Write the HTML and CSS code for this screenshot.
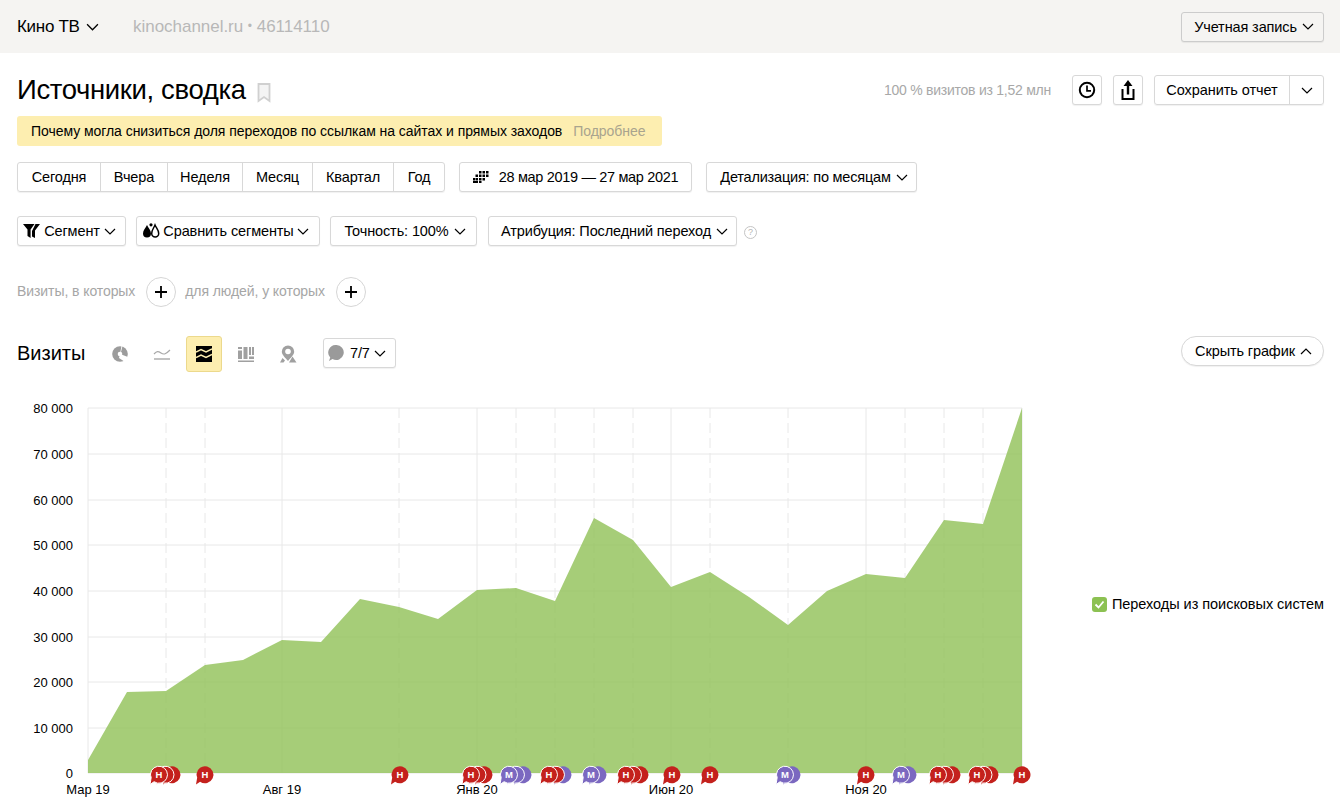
FILE: index.html
```html
<!DOCTYPE html>
<html lang="ru">
<head>
<meta charset="utf-8">
<title>Источники, сводка</title>
<link rel="stylesheet" href="styles.css">
</head>
<body>
<svg class="defs" width="0" height="0" aria-hidden="true">
  <defs>
    <path id="chev" d="M1 1l5 5 5-5" fill="none" stroke="currentColor" stroke-width="1.200"/>
    <path id="bub" d="M-8.500 0a8.500 8.500 0 1 1 3.600 7.700L-9 10.500-7.800 3.400A8.500 8.500 0 0 1-8.500 0z"/>
  </defs>
</svg>
<header class="topbar">
  <div class="site">Кино ТВ <svg class="chev chev-lg" viewBox="0 0 12 7"><use href="#chev"/></svg></div>
  <div class="domain">kinochannel.ru <span class="dot">•</span> 46114110</div>
  <button class="btn account">Учетная запись <svg class="chev" viewBox="0 0 12 7"><use href="#chev"/></svg></button>
</header>
<main class="page">
  <div class="title-row">
    <h1 class="title">Источники, сводка</h1>
    <svg class="bookmark" viewBox="0 0 14 20"><path d="M1.500 1h11v17L7 14l-5.500 4z" fill="#f4f4f4" stroke="#d0d0d0" stroke-width="1.800"/></svg>
    <div class="title-tools">
      <span class="share-info">100 % визитов из 1,52 млн</span>
      <button class="btn icon-btn"><svg width="18" height="18" viewBox="0 0 18 18"><circle cx="9" cy="9" r="7.200" fill="none" stroke="#000" stroke-width="2"/><path d="M9 4.500V9.800H13" fill="none" stroke="#000" stroke-width="1.700"/></svg></button>
      <button class="btn icon-btn"><svg width="16" height="22" viewBox="0 0 16 22"><path d="M8 1l4.500 6H9.200v8.500H6.800V7H3.500z" fill="#000"/><path d="M1.500 10v11h13V10h-2v9h-9v-9z" fill="#000"/></svg></button>
      <div class="group save">
        <button class="seg-btn save-main">Сохранить отчет</button>
        <button class="seg-btn save-more"><svg class="chev" viewBox="0 0 12 7"><use href="#chev"/></svg></button>
      </div>
    </div>
  </div>
  <div class="banner">
    <span>Почему могла снизиться доля переходов по ссылкам на сайтах и прямых заходов</span>
    <span class="banner-link">Подробнее</span>
  </div>
  <div class="controls row-dates">
    <div class="group">
      <button class="seg-btn w-today">Сегодня</button>
      <button class="seg-btn w-yest">Вчера</button>
      <button class="seg-btn w-week">Неделя</button>
      <button class="seg-btn w-month">Месяц</button>
      <button class="seg-btn w-quarter">Квартал</button>
      <button class="seg-btn w-year">Год</button>
    </div>
    <button class="btn date">
      <svg width="16" height="12" viewBox="0 0 16 12" fill="#000"><path d="M6 0h2.500v2.500H6zM9.500 0H12v2.500H9.500zM13 0h2.500v2.500H13zM2.500 3.500H5V6H2.500zM6 3.500h2.500V6H6zM9.500 3.500H12V6H9.500zM13 3.500h2.500V6H13zM0 7h2.500v2.500H0zM3 7h2v2.500H3zM6 7h2.500v2.500H6zM9.500 7H12v2.500H9.500zM0 10h5v2H0zM6 10h2.500v2H6z"/></svg>
      <span class="date-text">28 мар 2019 — 27 мар 2021</span>
    </button>
    <button class="btn detail">Детализация: по месяцам <svg class="chev" viewBox="0 0 12 7"><use href="#chev"/></svg></button>
  </div>
  <div class="controls row-seg">
    <button class="btn segment">
      <svg width="17" height="14" viewBox="0 0 17 14" fill="#000"><path d="M0 0h11.500L7.600 5.500V14L4.500 12V5.500z"/><path d="M12.500 0h4.500l-5 6.500V14L9 12.500V7z"/></svg>
      <span>Сегмент</span><svg class="chev" viewBox="0 0 12 7"><use href="#chev"/></svg>
    </button>
    <button class="btn compare">
      <svg width="18" height="16" viewBox="0 0 18 16"><path d="M5 2C3.500 5 1 7.500 1 10.500a4 4 0 0 0 8 0C9 7.500 6.500 5 5 2z" fill="#000"/><path d="M13 2c-1.200 3-3.300 5-3.300 8.500a3.500 3.500 0 0 0 7 0C16.700 7 14.200 5 13 2z" fill="#fff" stroke="#000" stroke-width="1.500"/><circle cx="9" cy="1.800" r="1.600" fill="#000"/></svg>
      <span>Сравнить сегменты</span><svg class="chev" viewBox="0 0 12 7"><use href="#chev"/></svg>
    </button>
    <button class="btn accuracy">Точность: 100% <svg class="chev" viewBox="0 0 12 7"><use href="#chev"/></svg></button>
    <button class="btn attribution">Атрибуция: Последний переход <svg class="chev" viewBox="0 0 12 7"><use href="#chev"/></svg></button>
    <span class="help">?</span>
  </div>
  <div class="conditions">
    <span class="cond-text">Визиты, в которых</span>
    <button class="plus"><svg width="14" height="14" viewBox="0 0 14 14"><path d="M7 1v12M1 7h12" stroke="#000" stroke-width="1.800"/></svg></button>
    <span class="cond-text">для людей, у которых</span>
    <button class="plus"><svg width="14" height="14" viewBox="0 0 14 14"><path d="M7 1v12M1 7h12" stroke="#000" stroke-width="1.800"/></svg></button>
  </div>
  <div class="chart-head">
    <h2 class="chart-title">Визиты</h2>
    <span class="type-btn"><svg width="16" height="16" viewBox="0 0 16 16"><circle cx="8" cy="8" r="7.800" fill="#9c9c9c"/><path d="M8 8L16 11 13 16 7 12z" fill="#fff"/><path d="M8 8L9.500 0 10.500 0 9 6z" fill="#fff"/><circle cx="8" cy="8" r="2.300" fill="#fff"/></svg></span>
    <span class="type-btn"><svg width="18" height="12" viewBox="0 0 18 12" fill="none" stroke="#a8a8a8" stroke-width="1.200"><path d="M1 6c3-3 4-3 7-1s5 1 9-3"/><path d="M1 11h16" stroke-width="1.400"/></svg></span>
    <span class="type-btn active"><svg width="16" height="16" viewBox="0 0 16 16"><rect width="16" height="16" fill="#000"/><path d="M0 6l5-2.500 5 2.500 6-3M0 11.500l5-2.500 5 2.500 6-3" fill="none" stroke="#fdeeb0" stroke-width="1.500"/></svg></span>
    <span class="type-btn"><svg width="18" height="18" viewBox="0 0 18 18" fill="#a0a0a0"><path d="M1 2h4v2H1zM1 5.500h4V14H1zM6.500 2h4v12h-4zM12 2h2v8h-2zM15 2h2v8h-2zM12 11.500h5V14h-5zM1 15.500h16V17H1z"/></svg></span>
    <span class="type-btn"><svg width="18" height="18" viewBox="0 0 18 18"><path d="M9 .5a6.200 6.200 0 0 1 6.200 6.200c0 2.800-3.500 6-6.200 9.300-2.700-3.300-6.200-6.500-6.200-9.300A6.200 6.200 0 0 1 9 .5z" fill="#a0a0a0"/><circle cx="9" cy="6.500" r="2.800" fill="#fff"/><path d="M1 17.500l2.500-4.500 2.500 2.500-1.500 2zM10 17.500l3.500-6 4 6z" fill="#a0a0a0"/></svg></span>
    <button class="btn notes">
      <svg width="16" height="16" viewBox="0 0 16 16"><path d="M8 0a7.500 7.500 0 1 1-3.500 14L1 16l1.200-3.500A7.500 7.500 0 0 1 8 0z" fill="#9a9a9a"/></svg>
      <span>7/7</span><svg class="chev" viewBox="0 0 12 7"><use href="#chev"/></svg>
    </button>
    <button class="btn hide-chart">Скрыть график <svg class="chev" viewBox="0 0 12 7"><path d="M1 6l5-5 5 5" fill="none" stroke="currentColor" stroke-width="1.200"/></svg></button>
  </div>
  <div class="chart-row">
    <svg class="chart" width="1040" height="408" viewBox="17 396 1040 408">
      <g class="grid">
        <path d="M88 408H1022M88 454H1022M88 500H1022M88 545H1022M88 591H1022M88 637H1022M88 682H1022M88 728H1022M88 773H1022"/>
        <path d="M88 408V773M282 408V773M477 408V773M671 408V773M866 408V773M1022 408V773"/>
        <path class="dash" d="M166 408V773M205 408V773M399 408V773M516 408V773M555 408V773M594 408V773M633 408V773M710 408V773M788 408V773M905 408V773M944 408V773M983 408V773"/>
      </g>
      <path class="area" d="M88 760L127 692 166 691 205 665 243 660 282 640 321 642 360 599 399 607 438 619 477 590 516 588 555 601 594 518 633 540 671 587 710 572 749 597 788 625 827 591 866 574 905 578 944 520 983 524 1022 408V773H88z"/>
      <g class="axis-y">
        <text x="73" y="413">80 000</text>
        <text x="73" y="459">70 000</text>
        <text x="73" y="505">60 000</text>
        <text x="73" y="550">50 000</text>
        <text x="73" y="596">40 000</text>
        <text x="73" y="642">30 000</text>
        <text x="73" y="687">20 000</text>
        <text x="73" y="733">10 000</text>
        <text x="73" y="778">0</text>
      </g>
      <g class="axis-x">
        <text x="88" y="794">Мар 19</text>
        <text x="282" y="794">Авг 19</text>
        <text x="477" y="794">Янв 20</text>
        <text x="671" y="794">Июн 20</text>
        <text x="866" y="794">Ноя 20</text>
      </g>
      <g class="flags">
        <use class="r" href="#bub" x="172" y="774"/><use class="r e" href="#bub" x="165.500" y="774"/><use class="r e" href="#bub" x="159" y="774"/><text x="159" y="777.500">Н</text>
        <use class="r" href="#bub" x="205" y="774"/><text x="205" y="777.500">Н</text>
        <use class="r" href="#bub" x="400" y="774"/><text x="400" y="777.500">Н</text>
        <use class="r" href="#bub" x="484" y="774"/><use class="r e" href="#bub" x="477.500" y="774"/><use class="r e" href="#bub" x="471" y="774"/><text x="471" y="777.500">Н</text>
        <use class="m" href="#bub" x="523" y="774"/><use class="m e" href="#bub" x="516" y="774"/><use class="m e" href="#bub" x="509" y="774"/><text x="509" y="777.500">М</text>
        <use class="m" href="#bub" x="563" y="774"/><use class="r e" href="#bub" x="556" y="774"/><use class="r e" href="#bub" x="549" y="774"/><text x="549" y="777.500">Н</text>
        <use class="m" href="#bub" x="598" y="774"/><use class="m e" href="#bub" x="591" y="774"/><text x="591" y="777.500">М</text>
        <use class="r" href="#bub" x="640" y="774"/><use class="r e" href="#bub" x="633" y="774"/><use class="r e" href="#bub" x="626" y="774"/><text x="626" y="777.500">Н</text>
        <use class="r" href="#bub" x="672" y="774"/><text x="672" y="777.500">Н</text>
        <use class="r" href="#bub" x="710" y="774"/><text x="710" y="777.500">Н</text>
        <use class="m" href="#bub" x="792" y="774"/><use class="m e" href="#bub" x="785" y="774"/><text x="785" y="777.500">М</text>
        <use class="r" href="#bub" x="866" y="774"/><text x="866" y="777.500">Н</text>
        <use class="m" href="#bub" x="908" y="774"/><use class="m e" href="#bub" x="901" y="774"/><text x="901" y="777.500">М</text>
        <use class="r" href="#bub" x="952" y="774"/><use class="r e" href="#bub" x="945" y="774"/><use class="r e" href="#bub" x="938" y="774"/><text x="938" y="777.500">Н</text>
        <use class="r" href="#bub" x="990" y="774"/><use class="r e" href="#bub" x="983.500" y="774"/><use class="r e" href="#bub" x="977" y="774"/><text x="977" y="777.500">Н</text>
        <use class="r" href="#bub" x="1022" y="774"/><text x="1022" y="777.500">Н</text>
      </g>
    </svg>
    <label class="legend">
      <svg width="15" height="15" viewBox="0 0 15 15"><rect width="15" height="15" rx="3" fill="#8cc152"/><path d="M3.500 7.500l3 3 5-6" fill="none" stroke="#fff" stroke-width="1.800"/></svg>
      <span>Переходы из поисковых систем</span>
    </label>
  </div>
</main>
</body>
</html>
```

FILE: styles.css
```css
* { box-sizing: border-box; }
html, body { margin: 0; padding: 0; background: #fff; }
body {
  font-family: "Liberation Sans", Arial, sans-serif;
  font-size: 14.5px;
  color: #000;
  overflow: hidden;
  height: 809px;
}
.defs { position: absolute; }
button { font: inherit; color: inherit; background: #fff; margin: 0; cursor: pointer; }
.chev { width: 12px; height: 7px; flex: none; display: inline-block; }
.chev-lg { width: 13px; height: 8px; margin-left: 3px; }

.topbar {
  height: 53px;
  background: #f5f4f2;
  display: flex;
  align-items: center;
  padding: 0 16px 0 17px;
}
.site { font-size: 17px; letter-spacing: -.3px; width: 116px; display: flex; align-items: center; gap: 3px; }
.domain { font-size: 17px; color: #b8b8b8; letter-spacing: -.03px; }
.dot { font-size: 12px; vertical-align: 2px; }

.btn {
  height: 30px;
  border: 1px solid #d8d8d8;
  border-radius: 3px;
  background: #fff;
  padding: 0;
  display: inline-flex;
  align-items: center;
  justify-content: center;
  gap: 5px;
  letter-spacing: -.12px;
  white-space: nowrap;
  box-shadow: 0 1px 1px rgba(0, 0, 0, .06);
}
.account { margin-left: auto; width: 143px; padding-left: 3px; background: #f5f4f2; border-color: #ccc; }

.page { padding: 0 16px 0 17px; }
.title-row { display: flex; align-items: center; height: 30px; margin-top: 22px; }
.title { font-size: 27.500px; font-weight: 400; letter-spacing: -.36px; margin: 0; line-height: 30px; }
.bookmark { width: 14px; height: 20px; margin: 6px 0 0 11px; }
.title-tools { margin-left: auto; display: flex; align-items: center; }
.share-info { color: #a8a8a8; font-size: 14px; letter-spacing: -.25px; margin-right: 21px; }
.icon-btn { width: 30px; margin-right: 11px; }
.icon-btn + .group { margin-left: 1px; }
.icon-btn:nth-of-type(2) { margin-right: 10px; }

.group {
  display: inline-flex;
  height: 30px;
  border: 1px solid #d8d8d8;
  border-radius: 3px;
  box-shadow: 0 1px 1px rgba(0, 0, 0, .06);
}
.seg-btn {
  height: 28px;
  border: 0;
  border-right: 1px solid #d8d8d8;
  background: transparent;
  padding: 0;
  letter-spacing: -.12px;
  white-space: nowrap;
}
.seg-btn:last-child { border-right: 0; }
.save-main { width: 135px; letter-spacing: -.06px; }
.save-more { width: 33px; display: inline-flex; align-items: center; justify-content: center; }
.w-today { width: 83px; }
.w-yest { width: 67px; }
.w-week { width: 75px; }
.w-month { width: 70px; }
.w-quarter { width: 81px; }
.w-year { width: 50px; }

.banner {
  margin-top: 11px;
  height: 30px;
  width: 645px;
  background: #fdeeb0;
  border-radius: 3px;
  display: flex;
  align-items: center;
  padding-left: 14px;
  gap: 11px;
  font-size: 14px;
  letter-spacing: -.05px;
  white-space: nowrap;
}
.banner-link { color: #a9a48e; }

.controls { display: flex; align-items: center; }
.row-dates { margin-top: 16px; }
.row-seg { margin-top: 24px; }
.date { width: 233px; margin-left: 14px; gap: 10px; }
.date-text { letter-spacing: -.33px; }
.detail { width: 211px; margin-left: 14px; padding-left: 5px; letter-spacing: -.2px; }
.segment { width: 109px; padding-right: 4px; gap: 4px; }
.compare { width: 184px; margin-left: 10px; padding-right: 5px; gap: 3px; }
.accuracy { width: 147px; margin-left: 10px; padding-left: 3px; }
.attribution { width: 249px; margin-left: 11px; padding-left: 4px; }
.help {
  width: 13px;
  height: 13px;
  margin: 2px 0 0 7px;
  border: 1px solid #c4c4c4;
  border-radius: 50%;
  color: #b4b4b4;
  font-size: 9px;
  line-height: 11px;
  text-align: center;
}

.conditions { display: flex; align-items: center; height: 30px; margin-top: 31px; gap: 11px; }
.cond-text { color: #a6a6a6; font-size: 14px; letter-spacing: -.08px; margin-top: -2px; }
.plus {
  width: 30px;
  height: 30px;
  margin-right: -2px;
  border: 1px solid #d6d6d6;
  border-radius: 50%;
  padding: 0;
  display: flex;
  align-items: center;
  justify-content: center;
}

.chart-head { display: flex; align-items: flex-start; height: 36px; margin-top: 29px; }
.chart-title { font-size: 20px; font-weight: 400; line-height: 34px; margin: 0 8px 0 0; width: 77px; }
.type-btn {
  width: 36px;
  height: 36px;
  margin-right: 6px;
  display: flex;
  align-items: center;
  justify-content: center;
  border-radius: 3px;
}
.active { background: #fdeeb0; border: 1px solid #ecd98c; }
.notes { width: 73px; margin: 2px 0 0 11px; padding-left: 4px; justify-content: flex-start; gap: 6px; }
.notes .chev { margin-left: -2px; }
.hide-chart { margin-left: auto; width: 143px; padding-left: 2px; border-radius: 15px; }

.chart-row { display: flex; align-items: center; justify-content: space-between; margin-top: 24px; }
.chart { display: block; flex: none; }
.grid path { fill: none; stroke: #e8e8e8; stroke-width: 1; }
.grid .dash { stroke-dasharray: 10 5; }
.area { fill: #90c056; fill-opacity: .8; }
.axis-y text { font-size: 13px; text-anchor: end; fill: #000; }
.axis-x text { font-size: 13px; text-anchor: middle; fill: #000; }
.flags .r { fill: #c4211d; }
.flags .m { fill: #7b68c0; }
.flags .e { stroke: #fff; stroke-width: 1; }
.flags text { font-size: 9.500px; font-weight: 700; fill: #fff; text-anchor: middle; }
.legend { display: flex; align-items: center; gap: 5px; white-space: nowrap; margin-top: 8px; letter-spacing: -.04px; }
```
